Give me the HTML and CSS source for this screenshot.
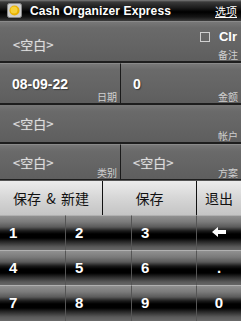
FILE: index.html
```html
<!DOCTYPE html>
<html>
<head>
<meta charset="utf-8">
<link rel="stylesheet" href="styles.css">
</head>
<body>
<div class="app">
  <div class="titlebar">
    <div class="logo"><svg width="15" height="15" viewBox="0 0 15 15"><rect x="0.5" y="0.5" width="14" height="14" rx="2" fill="#cfcfcf" stroke="#888"/><circle cx="7.5" cy="7.5" r="5" fill="#e8b000"/><circle cx="7" cy="7" r="3.5" fill="#f7d23a"/></svg></div>
    <div class="title">Cash Organizer Express</div>
    <div class="menu">选项</div>
  </div>
  <div class="field row1">
    <div class="val empty">&lt;空白&gt;</div>
    <div class="clr"><span class="box"></span><span>Clr</span></div>
    <div class="lbl">备注</div>
  </div>
  <div class="pair row2">
    <div class="field"><div class="val num">08-09-22</div><div class="lbl">日期</div></div>
    <div class="field"><div class="val num">0</div><div class="lbl">金额</div></div>
  </div>
  <div class="field row3">
    <div class="val empty">&lt;空白&gt;</div>
    <div class="lbl">帐户</div>
  </div>
  <div class="pair row4">
    <div class="field"><div class="val empty">&lt;空白&gt;</div><div class="lbl">类别</div></div>
    <div class="field"><div class="val empty">&lt;空白&gt;</div><div class="lbl">方案</div></div>
  </div>
  <div class="buttons">
    <div class="btn">保存 &amp; 新建</div>
    <div class="btn">保存</div>
    <div class="btn">退出</div>
  </div>
  <div class="keypad">
    <div class="key">1</div><div class="key">2</div><div class="key">3</div><div class="key c"><svg width="14" height="10" viewBox="0 0 14 10"><path d="M0 5 L6 0 L6 3 L14 3 L14 7 L6 7 L6 10 Z" fill="#fff"/></svg></div>
    <div class="key">4</div><div class="key">5</div><div class="key">6</div><div class="key c">.</div>
    <div class="key">7</div><div class="key">8</div><div class="key">9</div><div class="key c">0</div>
  </div>
</div>
</body>
</html>
```
FILE: styles.css
```css
* { box-sizing: border-box; }
html, body { margin: 0; padding: 0; background: #000; }
.app {
  width: 241px;
  height: 321px;
  overflow: hidden;
  display: flex;
  flex-direction: column;
  font-family: "Liberation Sans", "Noto Sans CJK SC", sans-serif;
  background: #2a2a2a;
}
.titlebar {
  height: 21px;
  flex: none;
  display: flex;
  align-items: center;
  padding: 0 4px 0 7px;
  background: linear-gradient(#7a7a7a 0, #3a3a3a 2px, #1a1a1a 8px, #000 12px, #151515 17px, #3c3c3c 21px);
  color: #fff;
}
.logo { width: 15px; height: 15px; display: flex; }
.title { font-weight: bold; font-size: 12px; margin-left: 8px; flex: 1; letter-spacing: 0.1px; }
.menu { font-size: 11px; text-decoration: underline; color: #fff; font-family: "Noto Sans CJK SC", sans-serif; }
.field {
  position: relative;
  background: linear-gradient(#787878 0, #6a6a6a 6px, #646464 60%, #5e5e5e 100%);
  border-top: 1px solid #8a8a8a;
  border-bottom: 1px solid #1e1e1e;
  display: flex;
  align-items: center;
  padding-left: 13px;
}
.row1 { height: 41px; padding-top: 6px; }
.pair { display: flex; flex: none; border-top: 1px solid #1e1e1e; }
.pair .field { flex: none; }
.pair .field:first-child { width: 121px; border-right: 1px solid #1a1a1a; }
.pair .field:last-child { flex: 1; padding-left: 12px; }
.row2 .field { padding-left: 12px; }
.row2 { height: 42px; }
.row2 .field { padding-top: 1px; }
.row3 { height: 39px; border-top: 1px solid #1e1e1e; }
.row4 { height: 37px; }
.val { font-size: 12px; }
.empty { color: #dcdcdc; font-family: "Noto Sans CJK SC", sans-serif; font-size: 13px; text-shadow: 0 0 1px #aaa; }
.num { color: #fff; font-weight: bold; font-size: 14px; text-shadow: 1px 1px 1px #3a3a3a; }
.lbl {
  position: absolute;
  right: 3px;
  bottom: 1px;
  font-size: 10px;
  color: #cfcfcf;
  font-family: "Noto Sans CJK SC", sans-serif;
  line-height: 11px;
}
.clr {
  position: absolute;
  right: 4px;
  top: 7px;
  display: flex;
  align-items: center;
  color: #fff;
  font-weight: bold;
  font-size: 13px;
}
.box { width: 10px; height: 10px; border: 1px solid #d0d0d0; margin-right: 9px; }
.buttons {
  height: 35px;
  flex: none;
  display: grid;
  grid-template-columns: 103px 94px 1fr;
  background: linear-gradient(#ececec, #d6d6d6 50%, #c4c4c4);
  border-top: 1px solid #555;
}
.btn {
  display: flex;
  align-items: center;
  justify-content: center;
  font-size: 14px;
  color: #111;
  font-family: "Noto Sans CJK SC", "Liberation Sans", sans-serif;
  border-right: 1px solid #111;
  word-spacing: 2px;
}
.btn:last-child { border-right: none; }
.keypad {
  flex: 1;
  display: grid;
  grid-template-columns: 66px 66px 65px 1fr;
  grid-template-rows: 35px 35px 36px;
  background: #777;
}
.key {
  display: flex;
  align-items: center;
  padding-left: 9px;
  padding-bottom: 2px;
  color: #fff;
  font-weight: bold;
  font-size: 15px;
  border-right: 1px solid #555;
  border-top: 1px solid #b0b0b0;
  background: linear-gradient(#909090 0, #7a7a7a 6px, #5a5a5a 11px, #1a1a1a 15px, #000 18px, #000 22px, #2a2a2a 26px, #5a5a5a 31px, #6a6a6a 35px);
}
.key.c { justify-content: center; padding-left: 0; border-right: none; }
```
